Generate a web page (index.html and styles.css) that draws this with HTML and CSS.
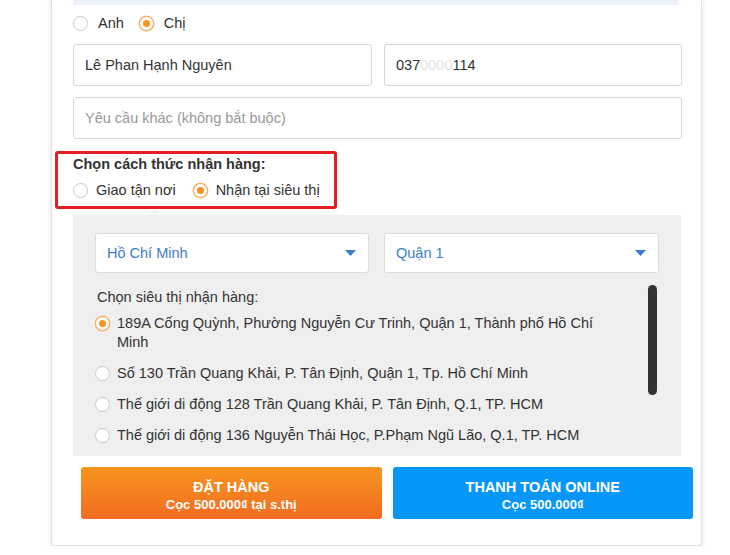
FILE: index.html
```html
<!DOCTYPE html>
<html lang="vi">
<head>
<meta charset="utf-8">
<title>Đặt hàng</title>
<link rel="stylesheet" href="styles.css">
</head>
<body>
<div class="card">
  <div class="info-bar"></div>

  <div class="gender">
    <label class="opt"><span class="radio"></span>Anh</label>
    <label class="opt"><span class="radio checked"></span>Chị</label>
  </div>

  <div class="row2">
    <div class="input">Lê Phan Hạnh Nguyên</div>
    <div class="input">037<span class="mask">0000</span>114</div>
  </div>
  <div class="input placeholder wide">Yêu cầu khác (không bắt buộc)</div>

  <div class="delivery">
    <div class="delivery-title">Chọn cách thức nhận hàng:</div>
    <div class="delivery-opts">
      <label class="opt"><span class="radio"></span>Giao tận nơi</label>
      <label class="opt"><span class="radio checked"></span>Nhận tại siêu thị</label>
    </div>
    <div class="highlight"></div>
  </div>

  <div class="panel">
    <div class="selects">
      <div class="select"><span>Hồ Chí Minh</span><svg class="caret" width="11" height="6" viewBox="0 0 11 6"><polygon points="0,0 11,0 5.5,6" fill="#3a7fcb"/></svg></div>
      <div class="select"><span>Quận 1</span><svg class="caret" width="11" height="6" viewBox="0 0 11 6"><polygon points="0,0 11,0 5.5,6" fill="#3a7fcb"/></svg></div>
    </div>
    <div class="stores">
      <div class="store-list">
        <div class="store-title">Chọn siêu thị nhận hàng:</div>
        <div class="store first"><span class="radio checked"></span><span class="store-text">189A Cống Quỳnh, Phường Nguyễn Cư Trinh, Quận 1, Thành phố Hồ Chí Minh</span></div>
        <div class="store"><span class="radio"></span><span class="store-text">Số 130 Trần Quang Khải, P. Tân Định, Quận 1, Tp. Hồ Chí Minh</span></div>
        <div class="store"><span class="radio"></span><span class="store-text">Thế giới di động 128 Trần Quang Khải, P. Tân Định, Q.1, TP. HCM</span></div>
        <div class="store"><span class="radio"></span><span class="store-text">Thế giới di động 136 Nguyễn Thái Học, P.Phạm Ngũ Lão, Q.1, TP. HCM</span></div>
      </div>
      <div class="scroll"><div class="thumb"></div></div>
    </div>
  </div>

  <div class="actions">
    <button class="btn btn-orange"><span class="btn-main">ĐẶT HÀNG</span><span class="btn-sub">Cọc 500.000₫ tại s.thị</span></button>
    <button class="btn btn-blue"><span class="btn-main">THANH TOÁN ONLINE</span><span class="btn-sub">Cọc 500.000₫</span></button>
  </div>
</div>
</body>
</html>
```

FILE: styles.css
```css
* { box-sizing: border-box; }

body {
  margin: 0;
  background: #fff;
  font-family: "Liberation Sans", Arial, sans-serif;
  font-size: 14.5px;
  color: #333;
}

.card {
  margin-left: 51px;
  width: 651px;
  background: #fff;
  border: 1px solid #e2e2e2;
  border-top: 0;
  border-radius: 0 0 4px 4px;
  box-shadow: 0 1px 5px rgba(0, 0, 0, 0.12);
  padding: 0 19px 26px 21px;
}

.info-bar {
  height: 5px;
  margin-right: 4px;
  background: #eef3fb;
}

.opt {
  display: flex;
  align-items: center;
  gap: 10px;
  line-height: 20px;
}

.radio {
  position: relative;
  flex: none;
  width: 15px;
  height: 15px;
  border: 1px solid #c9c9c9;
  border-radius: 50%;
  background: #fff;
}

.radio.checked {
  border-color: #f3a34a;
  box-shadow: 0 0 0 0.5px #f8c58d;
}

.radio.checked::after {
  content: "";
  position: absolute;
  left: 3px;
  top: 3px;
  width: 7px;
  height: 7px;
  border-radius: 50%;
  background: #f7931e;
}

.gender {
  display: flex;
  align-items: center;
  gap: 15px;
  height: 20px;
  margin-top: 8px;
}

.row2 {
  display: grid;
  grid-template-columns: 299px 298px;
  gap: 12px;
  margin-top: 11px;
}

.input {
  height: 42px;
  border: 1px solid #d6d6d6;
  border-radius: 3px;
  padding-left: 11px;
  display: flex;
  align-items: center;
  color: #333;
  background: #fff;
}

.mask {
  color: #e4e4e4;
}

.wide {
  margin-top: 11px;
}

.placeholder {
  color: #999;
}

.delivery {
  position: relative;
  margin-top: 15px;
}

.delivery-title {
  font-weight: bold;
  line-height: 20px;
}

.delivery-opts {
  display: flex;
  gap: 17px;
  margin-top: 6px;
}

.delivery-opts .opt {
  gap: 8px;
}

.highlight {
  position: absolute;
  left: -18px;
  top: -3px;
  width: 282px;
  height: 58px;
  border: 3px solid #e31e24;
  border-radius: 3px;
}

.panel {
  position: relative;
  width: 608px;
  margin-top: 15px;
  background: #efefef;
  padding: 18px 22px 10px 22px;
}

.panel::before {
  content: "";
  position: absolute;
  top: -6px;
  left: 75px;
  border-left: 7px solid transparent;
  border-right: 7px solid transparent;
  border-bottom: 6px solid #f6f6f6;
}

.selects {
  display: grid;
  grid-template-columns: 274px 275px;
  gap: 15px;
}

.select {
  height: 40px;
  border: 1px solid #dcdcdc;
  border-radius: 3px;
  background: #fff;
  display: flex;
  align-items: center;
  justify-content: space-between;
  padding: 0 12px 0 11px;
  color: #3d7ec8;
}

.stores {
  display: flex;
  height: 163px;
  margin-top: 10px;
}

.store-list {
  flex: 1;
  overflow: hidden;
  padding: 5px 24px 0 0;
}

.store-title {
  padding-left: 2px;
  line-height: 19px;
}

.store {
  display: flex;
  align-items: flex-start;
  gap: 7px;
  line-height: 19px;
  margin-top: 12px;
}

.store.first {
  margin-top: 7px;
}

.store .radio {
  margin-top: 2px;
}

.scroll {
  width: 9px;
  margin-right: 2px;
  padding-top: 2px;
}

.thumb {
  height: 110px;
  border-radius: 5px;
  background: #333;
}

.actions {
  display: grid;
  grid-template-columns: 1fr 1fr;
  gap: 11px;
  margin: 11px -11px 0 8px;
}

.btn {
  height: 52px;
  border: 0;
  border-radius: 3px;
  color: #fff;
  font-family: inherit;
  font-weight: bold;
  display: flex;
  flex-direction: column;
  align-items: center;
  justify-content: center;
  padding: 4px 0 0;
}

.btn-main {
  font-size: 14.5px;
  line-height: 18px;
}

.btn-sub {
  font-size: 13px;
  line-height: 17px;
}

.btn-orange {
  background: linear-gradient(#f8951d, #f26c22);
}

.btn-blue {
  background: #0797fb;
}
```
